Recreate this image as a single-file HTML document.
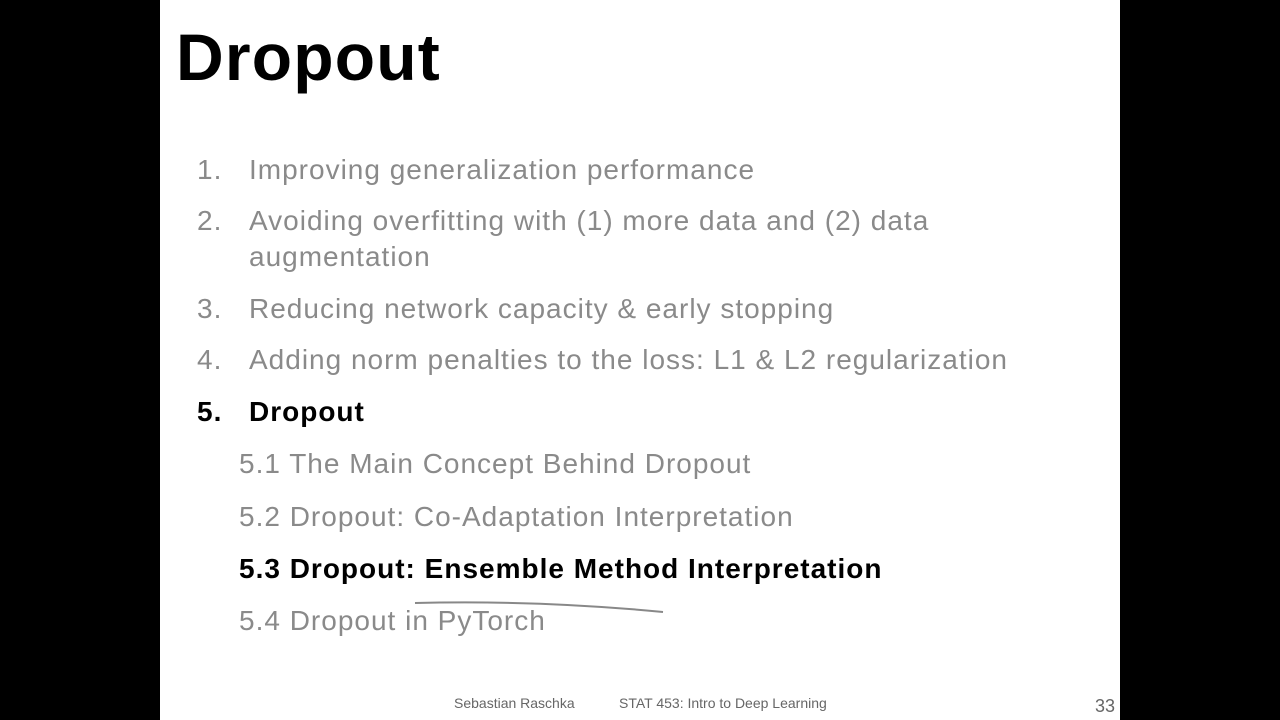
<!DOCTYPE html>
<html><head><style>
body{margin:0;width:1280px;height:720px;background:#000;position:relative;overflow:hidden;font-family:"Liberation Sans",sans-serif}
.s{position:absolute;left:160px;top:0;width:960px;height:720px;background:#fff}
.t{position:absolute;left:176px;top:19px;font-size:66px;font-weight:bold;color:#000;letter-spacing:1.2px}
.l{position:absolute;font-size:28px;color:#8a8a8a;white-space:nowrap;line-height:36px;letter-spacing:1px}
.b{color:#000;font-weight:bold}
.f{position:absolute;font-size:14px;color:#666;top:695px}
</style></head><body>
<div class="s"></div>
<div class="t">Dropout</div>
<div class="l" style="left:197px;top:152px">1.</div><div class="l" style="left:249px;top:152px">Improving generalization performance</div>
<div class="l" style="left:197px;top:203px">2.</div><div class="l" style="left:249px;top:203px">Avoiding overfitting with (1) more data and (2) data<br>augmentation</div>
<div class="l" style="left:197px;top:291px">3.</div><div class="l" style="left:249px;top:291px">Reducing network capacity &amp; early stopping</div>
<div class="l" style="left:197px;top:342px">4.</div><div class="l" style="left:249px;top:342px">Adding norm penalties to the loss: L1 &amp; L2 regularization</div>
<div class="l b" style="left:197px;top:394px">5.</div><div class="l b" style="left:249px;top:394px">Dropout</div>
<div class="l" style="left:239px;top:446px">5.1 The Main Concept Behind Dropout</div>
<div class="l" style="left:239px;top:499px">5.2 Dropout: Co-Adaptation Interpretation</div>
<div class="l b" style="left:239px;top:551px">5.3 Dropout: Ensemble Method Interpretation</div>
<div class="l" style="left:239px;top:603px">5.4 Dropout in PyTorch</div>
<svg style="position:absolute;left:0;top:0" width="1280" height="720"><path d="M415 603 Q540 600 663 612" stroke="#888" stroke-width="2" fill="none"/></svg>
<div class="f" style="left:454px">Sebastian Raschka</div>
<div class="f" style="left:619px">STAT 453: Intro to Deep Learning</div>
<div class="f" style="left:1095px;top:696px;font-size:18px">33</div>
</body></html>
